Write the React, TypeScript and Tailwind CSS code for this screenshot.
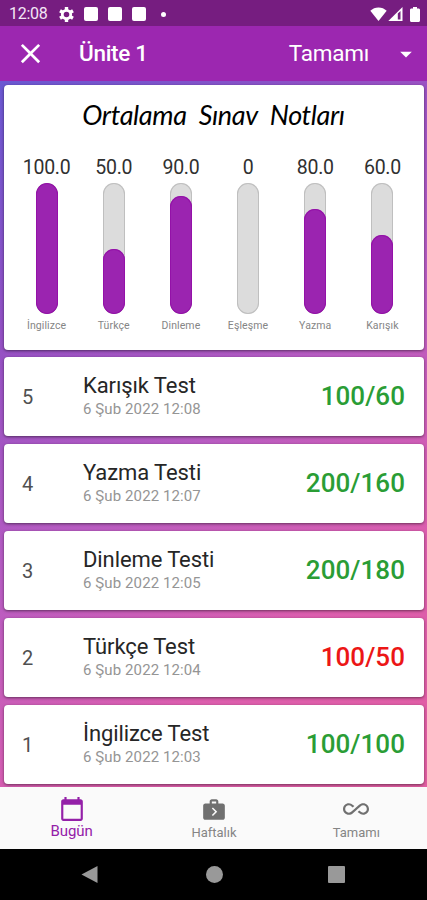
import React from "react";
import { MdClose, MdArrowDropDown, MdNextWeek, MdAllInclusive } from "react-icons/md";

const averages = [
  { label: "İngilizce", value: "100.0", percent: 100 },
  { label: "Türkçe", value: "50.0", percent: 50 },
  { label: "Dinleme", value: "90.0", percent: 90 },
  { label: "Eşleşme", value: "0", percent: 0 },
  { label: "Yazma", value: "80.0", percent: 80 },
  { label: "Karışık", value: "60.0", percent: 60 },
];

const tests = [
  { no: 5, name: "Karışık Test", date: "6 Şub 2022 12:08", score: "100/60", passed: true },
  { no: 4, name: "Yazma Testi", date: "6 Şub 2022 12:07", score: "200/160", passed: true },
  { no: 3, name: "Dinleme Testi", date: "6 Şub 2022 12:05", score: "200/180", passed: true },
  { no: 2, name: "Türkçe Test", date: "6 Şub 2022 12:04", score: "100/50", passed: false },
  { no: 1, name: "İngilizce Test", date: "6 Şub 2022 12:03", score: "100/100", passed: true },
];

const gearTeeth = [0, 60, 120, 180, 240, 300];

function GearIcon() {
  return (
    <svg className="h-[17px] w-[17px]" viewBox="0 0 17 17" fill="none" stroke="currentColor">
      <circle cx="8.5" cy="8.5" r="4.2" strokeWidth="2.8" />
      {gearTeeth.map((angle) => (
        <path key={angle} d="M8.500 1v3" strokeWidth="3.400" transform={`rotate(${angle} 8.5 8.5)`} />
      ))}
    </svg>
  );
}

function StatusBar() {
  return (
    <div className="flex h-[26px] shrink-0 items-center bg-[#761d80] pt-[2px] pl-[9px] pr-[3px] text-white">
      <span className="w-[49px] text-[16px] tracking-[-0.3px] text-[#f3e6f5]">12:08</span>
      <GearIcon />
      <div className="ml-[9px] flex gap-[10px]">
        <span className="size-[14px] rounded-[2px] bg-white" />
        <span className="size-[14px] rounded-[2px] bg-white" />
        <span className="size-[14px] rounded-[2px] bg-white" />
      </div>
      <span className="ml-[15px] size-[5px] rounded-full bg-white" />
      <svg className="ml-auto h-[14px] w-[17px]" viewBox="0 0 17 14" fill="currentColor">
        <path d="M8.500 14 0.300 3.800C2.600 1.600 5.300.4 8.500.4s5.900 1.200 8.200 3.400z" />
      </svg>
      <svg className="ml-[1px] h-[14px] w-[15px]" viewBox="0 0 15 14">
        <path d="M14.500 0v14H.3z" fill="#fff" />
        <path d="M9.800 6.500v6h2.700V4z" fill="#761d80" />
      </svg>
      <svg className="ml-[7px] mr-[4px] h-[15px] w-[10px]" viewBox="0 0 10 15" fill="currentColor">
        <path d="M3 0h4v1.500h1.500c.8 0 1.500.6 1.500 1.300v10.700c0 .9-.6 1.500-1.500 1.500h-7C.6 15 0 14.400 0 13.500V2.800c0-.7.7-1.300 1.500-1.300H3z" />
      </svg>
    </div>
  );
}

function AppBar() {
  return (
    <div className="flex h-[55px] shrink-0 items-center bg-[#9c27b0] pl-[14px] pr-[7px] text-white">
      <MdClose className="size-[33px]" />
      <h1 className="ml-[32px] pt-[1px] text-[22.500px] font-medium tracking-[-0.3px]">Ünite 1</h1>
      <span className="ml-auto pt-[1px] text-[22.500px] tracking-[-0.25px]">Tamamı</span>
      <MdArrowDropDown className="ml-[23px] size-[28px]" />
    </div>
  );
}

function AverageCard() {
  return (
    <section className="h-[265px] shrink-0 rounded-[4px] bg-white pl-[9px] pr-[8px] pt-[13px] shadow-[0_1px_3px_rgba(0,0,0,0.5)]">
      <h2 className="flex h-[34px] items-center justify-center gap-[12px] pr-[2px] font-['Lato','Open_Sans',sans-serif] text-[27px] tracking-[-0.35px] italic text-black">
        <span>Ortalama</span>
        <span>Sınav</span>
        <span>Notları</span>
      </h2>
      <div className="mt-[26px] grid grid-cols-6">
        {averages.map((a) => (
          <div key={a.label} className="flex flex-col items-center">
            <span className="h-[20px] text-[19.500px] leading-[20px] tracking-[-0.3px] text-[#303030]">{a.value}</span>
            <div className="mt-[5px] flex h-[131px] w-[22px] flex-col justify-end overflow-hidden rounded-full bg-[#dcdcdc] shadow-[inset_0_0_0_1px_#bfbfbf]">
              <div className="rounded-full bg-[#9b24b0] shadow-[inset_0_0_0_1px_#9411a8]" style={{ height: `${a.percent}%` }} />
            </div>
            <span className="mt-[5px] text-[10.500px] leading-[14px] tracking-[0.1px] text-[#858585]">{a.label}</span>
          </div>
        ))}
      </div>
    </section>
  );
}

function TestRow({ test }: { test: (typeof tests)[number] }) {
  return (
    <li className="flex h-[79px] shrink-0 items-center rounded-[4px] bg-white pl-[18px] pr-[19px] shadow-[0_1px_3px_rgba(0,0,0,0.5)]">
      <span className="w-[61px] pt-[1px] text-[20px] text-[#505050]">{test.no}</span>
      <div>
        <p className="text-[22px] leading-[24px] tracking-[-0.1px] text-[#262626]">{test.name}</p>
        <p className="text-[15px] leading-[22px] tracking-[0.1px] text-[#959595]">{test.date}</p>
      </div>
      <span className={`ml-auto text-[26px] font-medium tracking-[0.05px] ${test.passed ? "text-[#2a9d35]" : "text-[#ec1616]"}`}>
        {test.score}
      </span>
    </li>
  );
}

function BottomNav() {
  return (
    <nav className="grid h-[61px] shrink-0 grid-cols-3 bg-[#fafafa] text-[#707070]">
      <div className="flex flex-col items-center pt-[8px] pl-[1px] text-[#9420a8]">
        <svg className="size-[26px]" viewBox="0 0 24 24" fill="currentColor">
          <path d="M20 3h-1V1h-2v2H7V1H5v2H4c-1.100 0-2 .9-2 2v16c0 1.100.9 2 2 2h16c1.100 0 2-.9 2-2V5c0-1.100-.9-2-2-2zm0 18H4V8h16v13z" />
        </svg>
        <span className="text-[15px] leading-[19px] tracking-[-0.1px]">Bugün</span>
      </div>
      <div className="flex flex-col items-center pt-[8px] pl-[1px]">
        <MdNextWeek className="size-[26px]" />
        <span className="text-[13px] leading-[21px] text-[#858585]">Haftalık</span>
      </div>
      <div className="flex flex-col items-center pt-[8px] pl-[1px]">
        <MdAllInclusive className="size-[26px]" />
        <span className="text-[13px] leading-[21px] text-[#858585]">Tamamı</span>
      </div>
    </nav>
  );
}

function SystemNav() {
  return (
    <div className="flex h-[51px] shrink-0 items-center justify-between bg-black pl-[81px] pr-[82px]">
      <svg className="h-[19px] w-[17px]" viewBox="0 0 17 19" fill="#999">
        <path d="M16.500 1v17L.5 9.500z" />
      </svg>
      <span className="ml-[2px] size-[17px] rounded-full bg-[#999]" />
      <span className="size-[17px] rounded-[1px] bg-[#999]" />
    </div>
  );
}

export default function App() {
  return (
    <div className="flex h-[900px] w-[427px] flex-col overflow-hidden font-['Roboto','Noto_Sans',sans-serif]">
      <StatusBar />
      <AppBar />
      <main className="flex h-[706px] shrink-0 flex-col overflow-hidden bg-[linear-gradient(145deg,#6a58d2_0%,#9350c4_25%,#b85cc2_50%,#dc5eae_75%,#e25ea2_100%)] pt-[4px] pl-[4px] pr-[3px]">
        <AverageCard />
        <ul className="mt-[7px] flex flex-col gap-[8px]">
          {tests.map((t) => (
            <TestRow key={t.no} test={t} />
          ))}
        </ul>
      </main>
      <div className="flex h-[113px] shrink-0 flex-col bg-[#fafafa] pt-[1px]">
        <BottomNav />
        <SystemNav />
      </div>
    </div>
  );
}
